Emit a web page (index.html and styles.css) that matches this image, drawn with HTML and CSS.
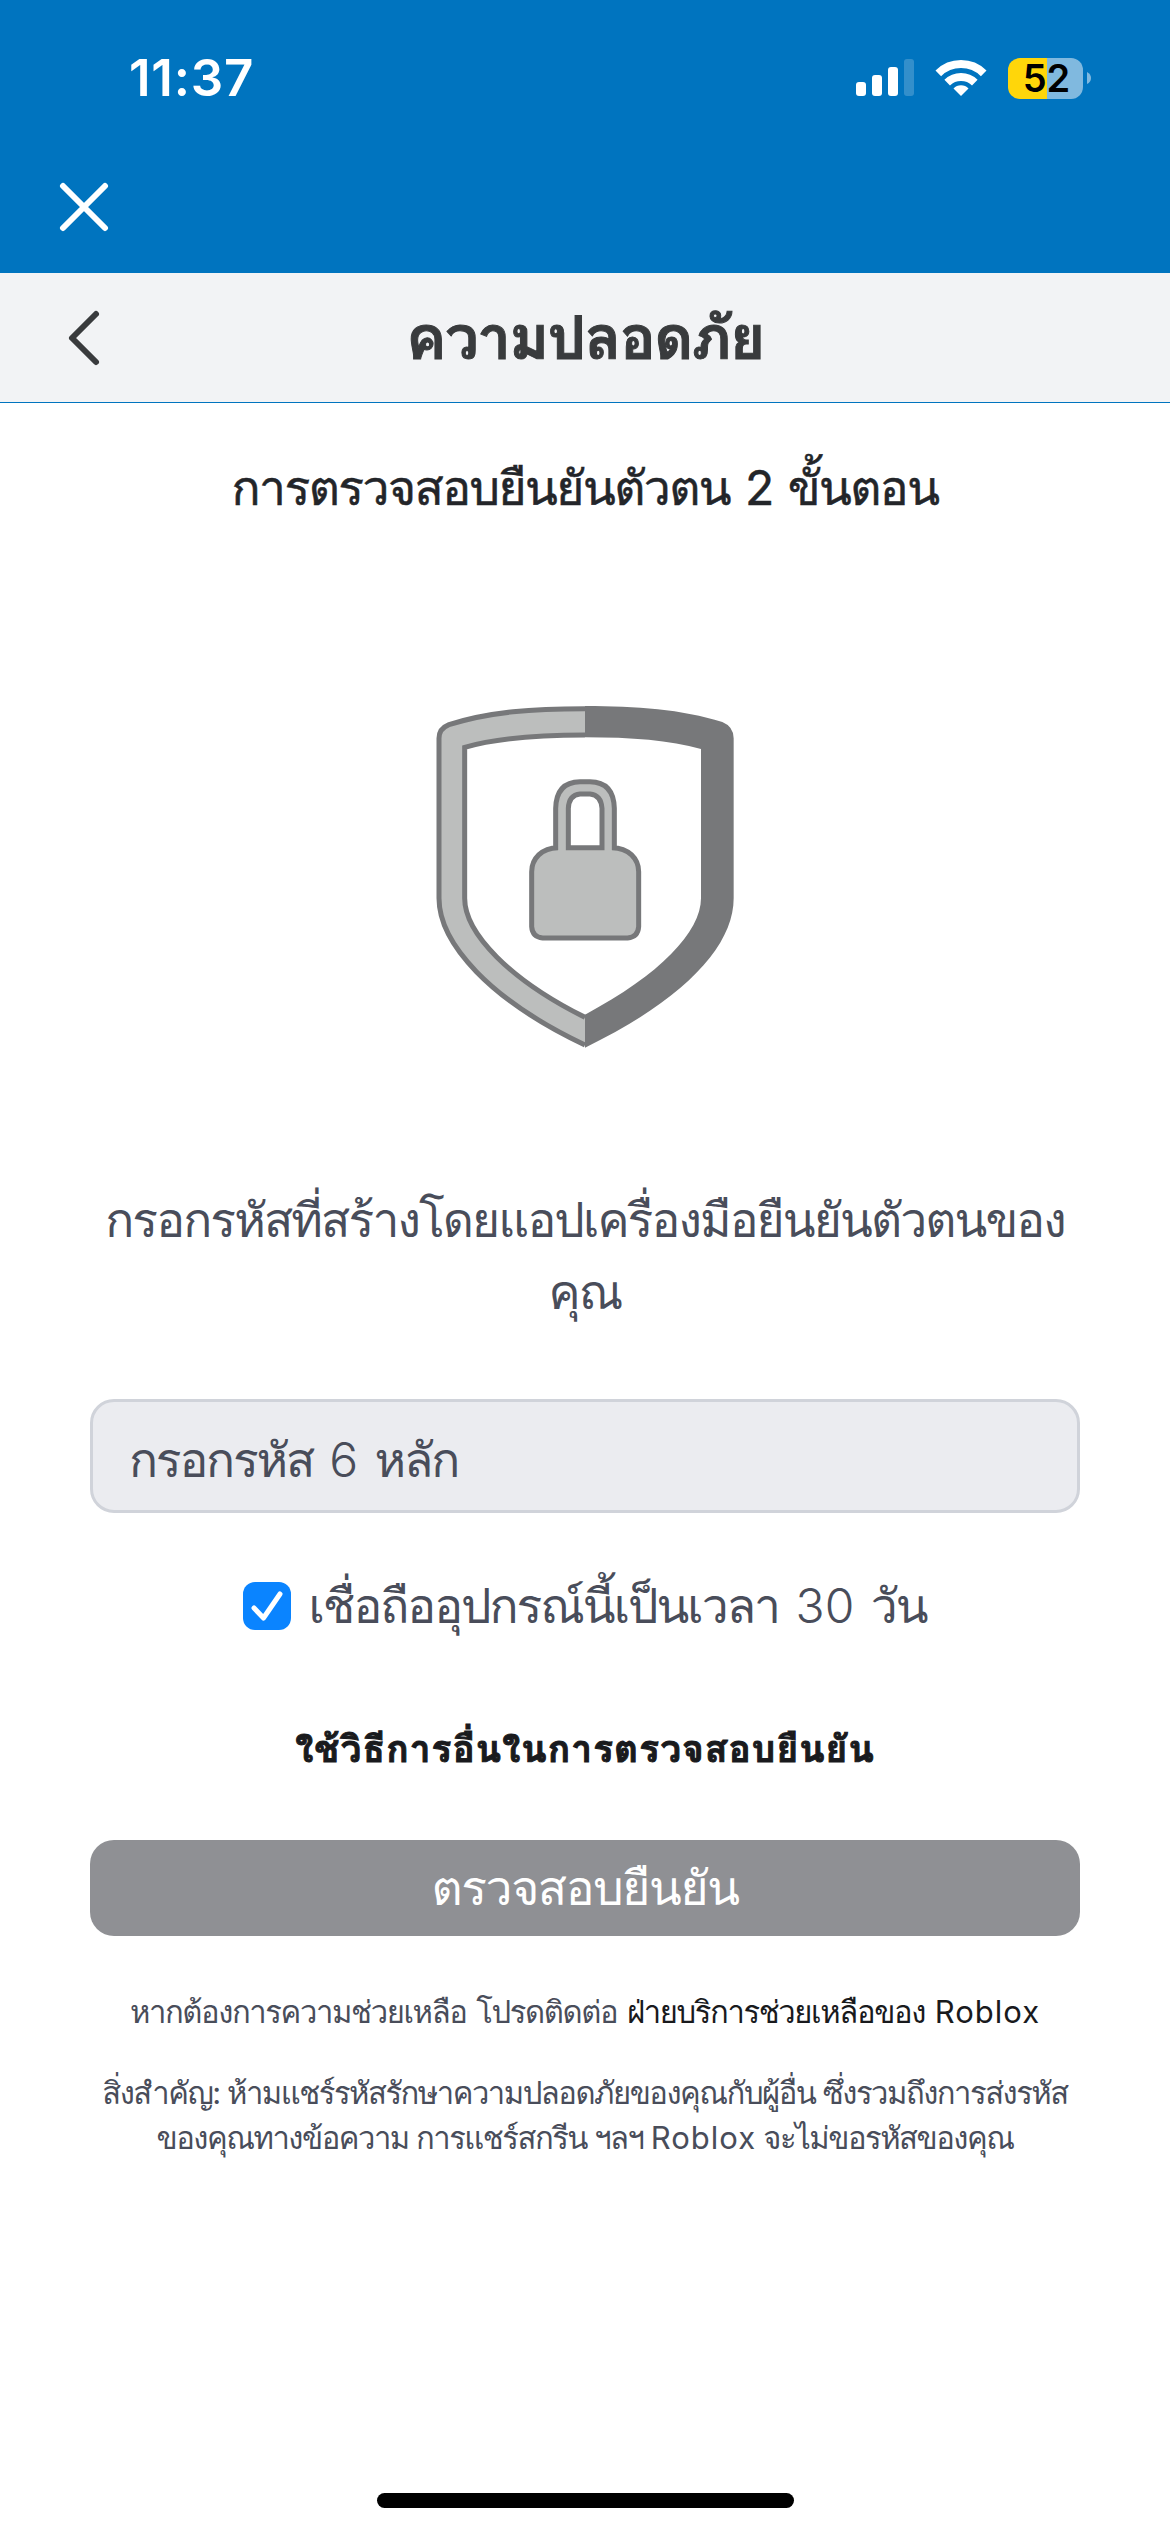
FILE: index.html
```html
<!DOCTYPE html>
<html lang="th">
<head>
<meta charset="utf-8">
<title>ความปลอดภัย</title>
<link rel="stylesheet" href="styles.css">
</head>
<body>
<div class="screen">
  <header class="app-bar">
    <div class="status">
      <span class="time">11:37</span>
      <div class="indicators">
        <svg class="signal" width="58" height="38" viewBox="0 0 58 38" fill="#fff">
          <rect x="0" y="23" width="10" height="14" rx="3"/>
          <rect x="16" y="16" width="10" height="21" rx="3"/>
          <rect x="32" y="8" width="10" height="29" rx="3"/>
          <rect x="48" y="0" width="10" height="37" rx="3" opacity=".2"/>
        </svg>
        <svg class="wifi" width="52" height="38" viewBox="0 0 52 38" fill="none" stroke="#fff">
          <path d="M3.3 14.3A32.4 32.4 0 0 1 48.7 14.3" stroke-width="8"/>
          <path d="M12.2 23.6A19.8 19.8 0 0 1 39.8 23.6" stroke-width="8"/>
          <path d="M26 37L18.5 29.4A10.6 10.6 0 0 1 33.5 29.4Z" fill="#fff" stroke="none"/>
        </svg>
        <div class="battery"><span class="level">52</span></div>
        <svg class="battery-tip" width="4" height="12" viewBox="0 0 4 12"><path d="M0 0Q4 2 4 6T0 12Z" fill="#80b9df"/></svg>
      </div>
    </div>
    <svg class="close" width="50" height="56" viewBox="0 0 50 56" fill="none" stroke="#fff" stroke-width="6" stroke-linecap="round"><path d="M4 7L46 49M46 7L4 49"/></svg>
  </header>
  <nav class="nav">
    <svg class="back" width="34" height="58" viewBox="0 0 34 58" fill="none" stroke="#393b3d" stroke-width="6" stroke-linecap="round" stroke-linejoin="round"><path d="M29 5L5 29L29 53"/></svg>
    <h1 class="title">ความปลอดภัย</h1>
  </nav>
  <main class="content">
    <h2 class="heading">การตรวจสอบยืนยันตัวตน 2 ขั้นตอน</h2>
    <svg class="shield" width="350" height="390" viewBox="0 0 1050 1170">
      <path d="M525 86C370 86 240 95 117 134Q87 146 87 175V655C87 790 240 960 525 1095L525 1012C300 900 164 760 164 655V202C262 174 380 165 525 165Z" fill="#bcbebd"/>
      <path d="M525 86C370 86 240 95 117 134Q87 146 87 175V655C87 790 240 960 525 1095M525 165C380 165 262 174 164 202V655C164 760 300 900 525 1012" fill="none" stroke="#77787a" stroke-width="15"/>
      <path d="M525 78C680 78 815 88 937 126Q971 140 971 175V655C971 800 820 960 525 1103V1004C750 885 873 755 873 655V207C780 181 665 172 525 172Z" fill="#77787a"/>
      <path d="M437 503V385Q439 306 510 305H540Q611 306 613 385V503Q686 507 686 575V740Q684 771 653 774H398Q367 771 365 740V575Q365 507 437 503ZM475 503H576V385Q573 345 540 342H510Q477 345 475 385Z" fill="#bcbebd" fill-rule="evenodd"/>
      <path d="M437 510V385Q439 306 510 305H540Q611 306 613 385V510M606 503C656 503 686 537 686 575V740Q684 771 653 774H398Q367 771 365 740V575C365 537 395 503 444 503M475 503H576V385Q573 345 540 342H510Q477 345 475 385Z" fill="none" stroke="#77787a" stroke-width="15"/>
    </svg>
    <p class="prompt">กรอกรหัสที่สร้างโดยแอปเครื่องมือยืนยันตัวตนของ<br>คุณ</p>
    <div class="code-field">กรอกรหัส <span class="digits">6</span> หลัก</div>
    <div class="trust">
      <svg class="checkbox" width="48" height="48" viewBox="0 0 48 48"><rect width="48" height="48" rx="12" fill="#0a84ff"/><path d="M11 26L20.5 36L37 12" fill="none" stroke="#fff" stroke-width="5" stroke-linecap="round" stroke-linejoin="round"/></svg>
      <span class="trust-label">เชื่อถืออุปกรณ์นี้เป็นเวลา <span class="digits">30</span> วัน</span>
    </div>
    <a class="other-method">ใช้วิธีการอื่นในการตรวจสอบยืนยัน</a>
    <button class="verify">ตรวจสอบยืนยัน</button>
    <p class="help">หากต้องการความช่วยเหลือ โปรดติดต่อ <a>ฝ่ายบริการช่วยเหลือของ <span class="brand">Roblox</span></a></p>
    <p class="notice">สิ่งสำคัญ: ห้ามแชร์รหัสรักษาความปลอดภัยของคุณกับผู้อื่น ซึ่งรวมถึงการส่งรหัส<br>ของคุณทางข้อความ การแชร์สกรีน ฯลฯ <span class="brand">Roblox</span> จะไม่ขอรหัสของคุณ</p>
  </main>
  <div class="home-indicator"></div>
</div>
</body>
</html>
```
FILE: styles.css
```css
* { box-sizing: border-box; margin: 0; padding: 0; }
body {
  width: 1170px;
  background: #fff;
  color: #494d5a;
  font-family: Inter, Loma, "Noto Sans", sans-serif;
  font-weight: 400;
}
.screen { height: 2532px; display: flex; flex-direction: column; align-items: stretch; }

.app-bar { height: 273px; background: #0074bf; }
.status { height: 156px; padding: 0 79px 0 129px; display: flex; justify-content: space-between; align-items: center; }
.time { color: #fff; font-size: 51px; font-weight: 600; line-height: 60px; letter-spacing: .8px; }
.indicators { display: flex; align-items: center; }
.wifi { margin-left: 21px; }
.battery { margin-left: 21px; width: 75px; height: 41px; border-radius: 12px; background: linear-gradient(90deg, #ffd60a 39px, #80b9df 39px); text-align: center; }
.level { display: block; padding-left: 2px; color: #000; font-size: 38px; font-weight: 600; line-height: 41px; }
.battery-tip { margin-left: 4px; }
.close { display: block; margin: 23px 0 0 59px; }

.nav { height: 130px; padding: 0 67px; background: #f2f3f5; border-bottom: 1px solid #0074bf; display: flex; align-items: center; }
.title { flex: 1; margin-right: 34px; padding-bottom: 2px; text-align: center; color: #393b3d; font-size: 60px; font-weight: 700; line-height: 90px; letter-spacing: -1.4px; -webkit-text-stroke: 1px; }

.content { padding: 55px 90px 0; display: flex; flex-direction: column; align-items: center; text-align: center; white-space: nowrap; }
.heading { color: #232529; font-size: 48px; font-weight: 400; line-height: 60px; letter-spacing: -1.55px; word-spacing: 3px; -webkit-text-stroke: .5px; }
.shield { display: block; margin-top: 162px; }
.prompt { margin-top: 114px; font-size: 48px; line-height: 72px; font-weight: 300; letter-spacing: -1.9px; }
.code-field { margin-top: 71px; width: 100%; height: 114px; padding: 8px 36px 0; border: 3px solid #d0d3da; border-radius: 24px; background: #ebecf0; text-align: left; font-size: 48px; line-height: 99px; font-weight: 300; letter-spacing: -2.2px; word-spacing: 5px; }
.trust { margin-top: 69px; height: 48px; display: flex; align-items: center; gap: 17px; }
.trust-label { font-size: 48px; line-height: 48px; font-weight: 300; letter-spacing: -2px; word-spacing: 5px; }
.digits { font-weight: 350; letter-spacing: 0; }
.other-method { margin-top: 95px; color: #191a1d; font-size: 37px; line-height: 48px; font-weight: 700; letter-spacing: 1.1px; -webkit-text-stroke: 1px; }
.verify { margin-top: 67px; width: 100%; height: 96px; border: 0; border-radius: 24px; background: #8f9094; color: #fff; font: 400 48px/96px Inter, Loma, sans-serif; letter-spacing: -1.4px; }
.help { margin-top: 54px; font-size: 31px; line-height: 44px; letter-spacing: -1.4px; word-spacing: 2.5px; }
.help a { color: #191a1d; }
.brand { letter-spacing: 1px; }
.notice { margin-top: 36px; font-size: 31px; line-height: 45px; letter-spacing: -1.5px; }

.home-indicator { width: 417px; height: 15px; margin: auto auto 24px; border-radius: 8px; background: #000; }
```
